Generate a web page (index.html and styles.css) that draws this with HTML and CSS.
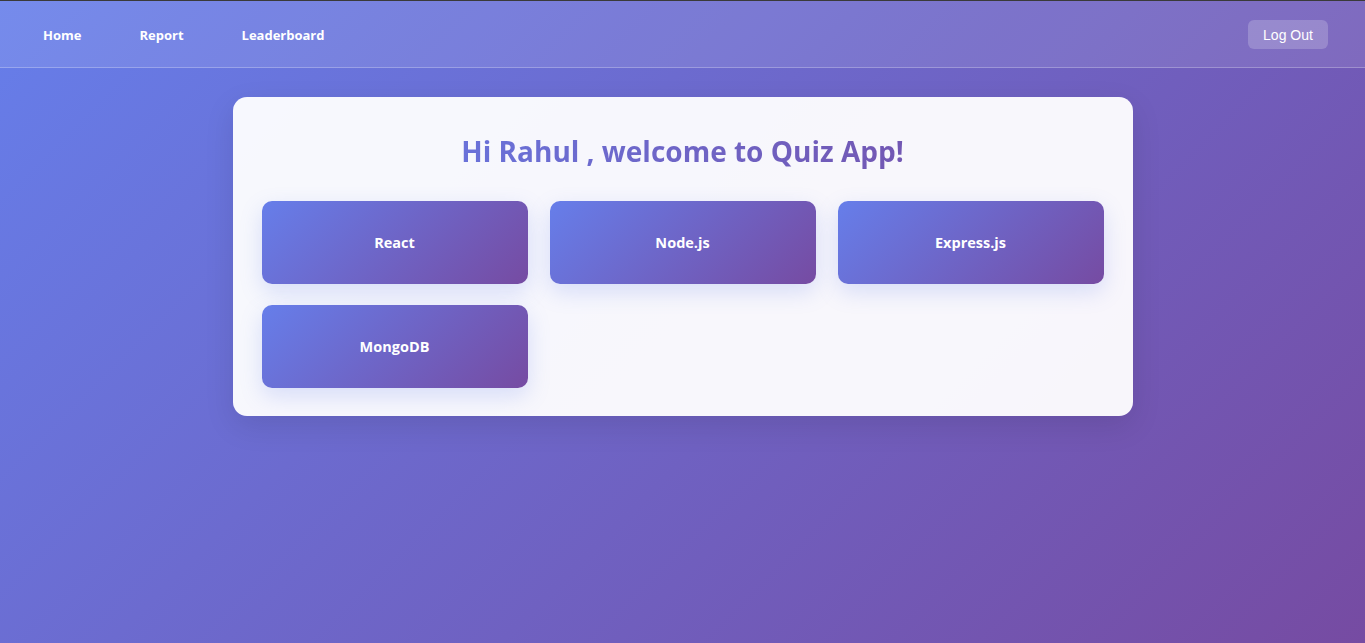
FILE: index.html
```html
<!DOCTYPE html>
<html lang="en">
<head>
<meta charset="utf-8">
<title>Quiz App</title>
<link rel="stylesheet" href="styles.css">
</head>
<body>
<div class="app">
  <nav class="navbar">
    <div class="nav-links">
      <a class="nav-link" href="#">Home</a>
      <a class="nav-link" href="#">Report</a>
      <a class="nav-link" href="#">Leaderboard</a>
    </div>
    <button class="logout">Log Out</button>
  </nav>
  <main class="main">
    <section class="card">
      <h1 class="title">Hi Rahul , welcome to Quiz App!</h1>
      <div class="grid">
        <div class="tile">React</div>
        <div class="tile">Node.js</div>
        <div class="tile">Express.js</div>
        <div class="tile">MongoDB</div>
      </div>
    </section>
  </main>
</div>
</body>
</html>
```

FILE: styles.css
```css
* { box-sizing: border-box; }
html, body { margin: 0; padding: 0; height: 100%; }
body {
  font-family: "Open Sans", "Noto Sans", sans-serif;
  background: linear-gradient(135deg, #667eea 0%, #764ba2 100%);
  min-height: 100vh;
  border-top: 1px solid #3a3a3a;
}
.app { min-height: 100%; }
.navbar {
  height: 67px;
  display: flex;
  align-items: center;
  justify-content: space-between;
  padding: 0 37px 0 43px;
  background: rgba(255, 255, 255, 0.1);
  border-bottom: 1px solid rgba(255, 255, 255, 0.25);
}
.nav-links { display: flex; gap: 58px; padding-top: 2px; }
.nav-link {
  color: #fff;
  text-decoration: none;
  font-weight: 700;
  font-size: 13px;
}
.logout {
  font-family: "Liberation Sans", Arial, sans-serif;
  font-size: 14px;
  color: #fff;
  background: rgba(255, 255, 255, 0.2);
  border: none;
  border-radius: 6px;
  width: 80px;
  height: 29px;
  padding: 0;
  margin-top: 1px;
}
.main {
  display: flex;
  justify-content: center;
  padding-top: 29px;
}
.card {
  width: 900px;
  background: rgba(255, 255, 255, 0.95);
  border-radius: 14px;
  padding: 34px 29px 28px;
  box-shadow: 0 10px 30px rgba(0, 0, 0, 0.1);
}
.title {
  margin: 0 0 30px;
  text-align: center;
  font-size: 28px;
  font-weight: 700;
  line-height: 40px;
  background: linear-gradient(90deg, #667eea, #764ba2);
  -webkit-background-clip: text;
  background-clip: text;
  color: transparent;
}
.grid {
  display: grid;
  grid-template-columns: repeat(3, 1fr);
  column-gap: 22px;
  row-gap: 21px;
}
.tile {
  height: 83px;
  border-radius: 10px;
  background: linear-gradient(135deg, #667eea 0%, #764ba2 100%);
  color: #fff;
  font-weight: 700;
  font-size: 14.5px;
  display: flex;
  align-items: center;
  justify-content: center;
  box-shadow: 0 8px 22px rgba(102, 126, 234, 0.22);
}
```
